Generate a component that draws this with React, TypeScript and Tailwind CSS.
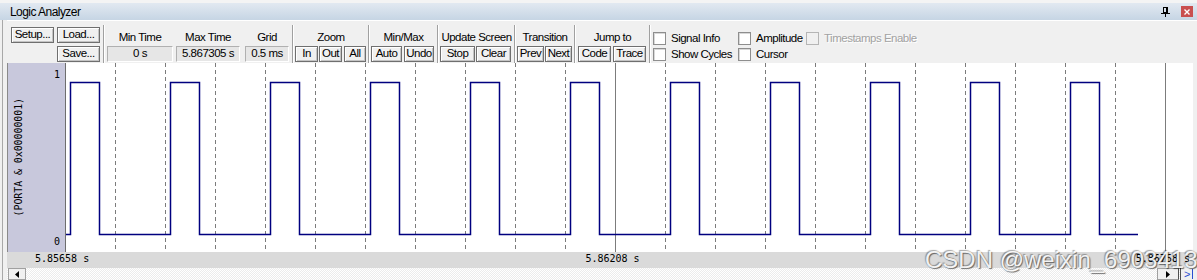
import React from "react";

const sans = "font-['Liberation_Sans',Arial,sans-serif]";
const mono = "font-['DejaVu_Sans_Mono','Liberation_Mono',monospace]";

const btnBase =
  "h-[16px] border border-[#6f6f6f] bg-[#f0f0f0] shadow-[inset_1px_1px_0_#ffffff,inset_-1px_-1px_0_#c4c4c4] flex items-center justify-center leading-none text-black";

function Btn({ className, children }: { className: string; children: React.ReactNode }) {
  return <div className={`${btnBase} ${className}`}>{children}</div>;
}

function Sep() {
  return <div className="w-[2px] mt-[4px] border-l border-r border-l-[#a0a0a0] border-r-white" />;
}

function Label({ children }: { children: React.ReactNode }) {
  return <div className="h-[16px] flex items-end justify-center leading-none whitespace-nowrap">{children}</div>;
}

function Readout({ className, label, value }: { className: string; label: string; value: string }) {
  return (
    <div className={`flex flex-col ${className}`}>
      <Label>{label}</Label>
      <div className="mt-[3px] h-[16px] border border-[#b0b0b0] border-r-white border-b-white bg-[#e6e6e6] flex items-center justify-center leading-none whitespace-nowrap">
        {value}
      </div>
    </div>
  );
}

function Check({ label, disabled }: { label: string; disabled?: boolean }) {
  return (
    <div className="h-[13px] flex items-center whitespace-nowrap">
      <div
        className={`w-[13px] h-[13px] border ${
          disabled
            ? "border-[#b5b5b5] bg-[#f0f0f0]"
            : "border-[#8e8e8e] bg-white shadow-[inset_1px_1px_0_#d8d8d8]"
        }`}
      />
      <span
        className={`ml-[5px] leading-none ${
          disabled ? "text-[#a2a2a2] [text-shadow:1px_1px_0_#ffffff]" : "text-black"
        }`}
      >
        {label}
      </span>
    </div>
  );
}

function Toolbar() {
  return (
    <div className="h-[43px] border-t border-white flex text-[11.5px] tracking-[-0.5px] text-black">
      {/* file buttons */}
      <div className="w-[96px] pl-[4px] pt-[6px] flex flex-col">
        <div className="flex gap-[3px]">
          <Btn className="w-[43px]">Setup...</Btn>
          <Btn className="w-[43px]">Load...</Btn>
        </div>
        <div className="mt-[3px] pl-[46px] flex">
          <Btn className="w-[43px]">Save...</Btn>
        </div>
      </div>
      <Sep />
      <div className="w-[187px] pl-[2px] pt-[6px] flex">
        <Readout className="w-[66px]" label="Min Time" value="0 s" />
        <Readout className="w-[64px] ml-[3px]" label="Max Time" value="5.867305 s" />
        <Readout className="w-[44px] ml-[5px]" label="Grid" value="0.5 ms" />
      </div>
      <Sep />
      <div className="w-[74px] pt-[6px] flex flex-col">
        <Label>Zoom</Label>
        <div className="mt-[3px] pl-[1px] flex">
          <Btn className="w-[23px]">In</Btn>
          <Btn className="w-[23px] ml-[1px]">Out</Btn>
          <Btn className="w-[22px] ml-[2px]">All</Btn>
        </div>
      </div>
      <Sep />
      <div className="w-[67px] pt-[6px] flex flex-col">
        <Label>Min/Max</Label>
        <div className="mt-[3px] pl-[1px] flex">
          <Btn className="w-[31px]">Auto</Btn>
          <Btn className="w-[30px] ml-[2px]">Undo</Btn>
        </div>
      </div>
      <Sep />
      <div className="w-[75px] pt-[6px] flex flex-col">
        <Label>Update Screen</Label>
        <div className="mt-[3px] pl-[1px] flex">
          <Btn className="w-[35px]">Stop</Btn>
          <Btn className="w-[35px] ml-[1px]">Clear</Btn>
        </div>
      </div>
      <Sep />
      <div className="w-[58px] pt-[6px] flex flex-col">
        <Label>Transition</Label>
        <div className="mt-[3px] pl-[1px] flex">
          <Btn className="w-[27px]">Prev</Btn>
          <Btn className="w-[27px] ml-[1px]">Next</Btn>
        </div>
      </div>
      <Sep />
      <div className="w-[73px] pt-[6px] flex flex-col">
        <Label>Jump to</Label>
        <div className="mt-[3px] pl-[2px] flex">
          <Btn className="w-[33px]">Code</Btn>
          <Btn className="w-[33px] ml-[2px]">Trace</Btn>
        </div>
      </div>
      <Sep />
      <div className="flex-1 pl-[2px] pt-[11px] flex">
        <div className="w-[85px] flex flex-col gap-[3px]">
          <Check label="Signal Info" />
          <Check label="Show Cycles" />
        </div>
        <div className="w-[68px] flex flex-col gap-[3px]">
          <Check label="Amplitude" />
          <Check label="Cursor" />
        </div>
        <div className="flex flex-col">
          <Check label="Timestamps Enable" disabled />
        </div>
      </div>
    </div>
  );
}

function Plot() {
  const grid = Array.from({ length: 22 }, (_, i) => 115 + i * 50);
  let d = "M66 234.5";
  for (let k = 0; k < 11; k++) {
    const up = 70.5 + k * 100;
    const down = 99.5 + k * 100;
    d += ` H${up} V82.5 H${down} V234.5`;
  }
  d += " H1138";
  return (
    <svg width={1127} height={189} viewBox="66 63 1127 189" className="block bg-white">
      {grid.map((x) =>
        x === 615 || x === 1165 ? (
          <line key={x} x1={x + 0.5} y1={63} x2={x + 0.5} y2={252} stroke="#7c7c7c" strokeWidth={1} shapeRendering="crispEdges" />
        ) : (
          <line
            key={x}
            x1={x + 0.5}
            y1={63}
            x2={x + 0.5}
            y2={252}
            stroke="#7c7c7c"
            strokeWidth={1}
            strokeDasharray="4 3"
            shapeRendering="crispEdges"
          />
        )
      )}
      <path d={d} fill="none" stroke="#00007f" strokeWidth={1.5} />
    </svg>
  );
}

export default function App() {
  return (
    <div className={`w-[1197px] h-[280px] bg-[#f0f0f0] overflow-hidden relative ${sans}`}>
      {/* title bar */}
      <div className="h-[3px] bg-[#f4f4f4]" />
      <div className="h-[17px] bg-linear-to-b from-[#e2e9f1] to-[#c6d5e4] flex items-center pl-[10px] pr-[4px]">
        <span className="text-[12px] tracking-[-0.55px] text-black leading-none">Logic Analyzer</span>
        <div className="flex-1" />
        <svg width="10" height="10" viewBox="0 0 10 10" className="mr-[10px]">
          <rect x="2.5" y="0.5" width="4" height="5" fill="none" stroke="#000" strokeWidth="1" />
          <rect x="5" y="0" width="2" height="6" fill="#000" />
          <rect x="0" y="6" width="9" height="1" fill="#000" />
          <rect x="4" y="7" width="1" height="3" fill="#000" />
        </svg>
        <div className="w-[12px] h-[11px] bg-[#c94f4f] flex items-center justify-center">
          <svg width="6" height="6" viewBox="0 0 6 6">
            <path d="M0.5 0.5 L5.5 5.5 M5.5 0.5 L0.5 5.5" stroke="#fff" strokeWidth="1.4" />
          </svg>
        </div>
      </div>

      <div className="flex h-[260px]">
        {/* left frame edge */}
        <div className="w-[7px] flex">
          <div className="ml-[2px] w-[1px] bg-[#a8a8a8]" />
        </div>

        <div className="flex-1 flex flex-col">
          <Toolbar />

          {/* waveform area */}
          <div className="h-[189px] flex">
            <div className={`w-[59px] border-l border-r border-l-[#8a8a8a] border-r-[#6e6e6e] bg-[#c8c8dc] flex ${mono} text-[10px] text-black`}>
              <div className="w-[22px] flex items-center justify-center">
                <span className="[writing-mode:vertical-rl] rotate-180 leading-[12px] tracking-[-0.1px] whitespace-nowrap">
                  (PORTA &amp; 0x00000001)
                </span>
              </div>
              <div className="flex-1 flex flex-col justify-between items-end pr-[5px] pt-[7px] pb-[5px] leading-none">
                <span>1</span>
                <span>0</span>
              </div>
            </div>
            <Plot />
            <div className="w-[4px] bg-[#f0f0f0]" />
          </div>

          {/* time axis */}
          <div className={`h-[16px] bg-[#dadada] flex pl-[28px] pr-[7px] ${mono} text-[10px] leading-[13px] text-black whitespace-nowrap`}>
            <span>5.85658 s</span>
            <div className="flex-1" />
            <span>5.86208 s</span>
            <div className="flex-1" />
            <span>5.86758 s</span>
          </div>

          {/* scroll bar */}
          <div className="h-[12px] flex bg-[repeating-conic-gradient(#ffffff_0_25%,#ececec_0_50%)] bg-[length:2px_2px]">
            <div className="w-[18px] ml-[1px] border border-[#a0a0a0] bg-[#f0f0f0] flex items-center justify-center">
              <svg width="4" height="7" viewBox="0 0 4 7">
                <path d="M4 0 L0 3.5 L4 7 Z" fill="#000" />
              </svg>
            </div>
            <div className="flex-1" />
            <div className="w-[22px] border border-[#a0a0a0] border-r-[#505050] bg-[#f0f0f0] flex items-center justify-center">
              <svg width="4" height="7" viewBox="0 0 4 7">
                <path d="M0 0 L4 3.5 L0 7 Z" fill="#000" />
              </svg>
            </div>
            <div className="w-[17px] ml-[1px] border-l border-[#505050] bg-[#f0f0f0] flex items-center pl-[3px] gap-[2px]">
              <span className="text-[11px] leading-none text-[#2a4fd0]">&gt;</span>
              <div className="w-[1px] h-[10px] bg-[#2a4fd0]" />
            </div>
          </div>
        </div>
      </div>

      {/* page watermark */}
      <div className="absolute left-[925px] top-[248px] text-[24px] leading-none whitespace-nowrap text-white/90 [text-shadow:1px_1px_1px_rgba(0,0,0,0.55),-1px_-1px_1px_rgba(0,0,0,0.35)] pointer-events-none">
        CSDN @weixin_69034136
      </div>
    </div>
  );
}
